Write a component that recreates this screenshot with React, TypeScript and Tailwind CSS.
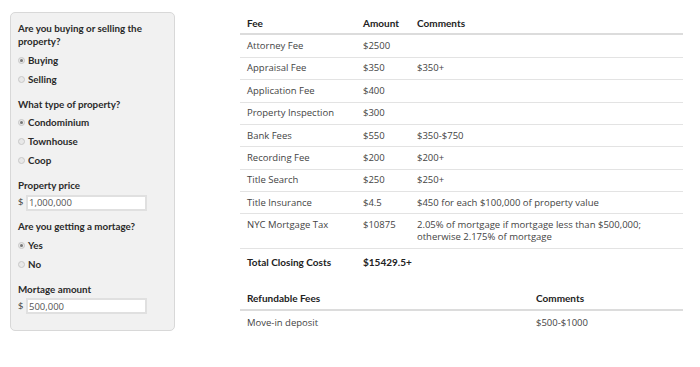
import React from 'react';

const fees = [
  { fee: 'Attorney Fee', amount: '$2500', comment: '' },
  { fee: 'Appraisal Fee', amount: '$350', comment: '$350+' },
  { fee: 'Application Fee', amount: '$400', comment: '' },
  { fee: 'Property Inspection', amount: '$300', comment: '' },
  { fee: 'Bank Fees', amount: '$550', comment: '$350-$750' },
  { fee: 'Recording Fee', amount: '$200', comment: '$200+' },
  { fee: 'Title Search', amount: '$250', comment: '$250+' },
  { fee: 'Title Insurance', amount: '$4.5', comment: '$450 for each $100,000 of property value' },
  { fee: 'NYC Mortgage Tax', amount: '$10875', comment: '2.05% of mortgage if mortgage less than $500,000; otherwise 2.175% of mortgage' },
];

const bold = 'font-bold font-[Lato,sans-serif]';

function Radio({ label, checked }: { label: string; checked?: boolean }) {
  return (
    <label className={`flex items-center h-[19px] gap-[3px] text-[#2a2a2a] text-[9.8px] ${bold}`}>
      <span className="w-[7px] h-[7px] rounded-full border border-[#c8c8c8] bg-[#e8e8e8] flex items-center justify-center">
        {checked && <span className="w-[3px] h-[3px] rounded-full bg-[#777]" />}
      </span>
      {label}
    </label>
  );
}

function Label({ children }: { children: React.ReactNode }) {
  return <div className={`text-[#2a2a2a] text-[9.8px] leading-[13px] mb-[2.5px] ${bold}`}>{children}</div>;
}

function MoneyInput({ value }: { value: string }) {
  return (
    <div className="flex items-center h-[16px] gap-[2px] text-[#444]">
      <span className="w-[5px]">$</span>
      <input
        readOnly
        value={value}
        className="ml-[1px] w-[121px] h-[16px] bg-white border-2 border-[#e0e0e0] px-[1px] text-[9.5px] text-[#555] outline-none"
      />
    </div>
  );
}

const cell = 'px-[7px] py-[4.7px]';

export default function App() {
  return (
    <div className="flex items-start bg-white w-[700px] h-[367px] text-[9.5px]" style={{ fontFamily: '"Open Sans", sans-serif' }}>
      <aside className="ml-[10px] mt-[12px] w-[165px] rounded-[5px] border border-[#d8d8d8] bg-[#f1f1f1] pl-[7px] pr-[10px] pt-[9px] pb-[16px]">
        <Label>Are you buying or selling the property?</Label>
        <Radio label="Buying" checked />
        <Radio label="Selling" />

        <div className="mt-[9px]">
          <Label>What type of property?</Label>
          <Radio label="Condominium" checked />
          <Radio label="Townhouse" />
          <Radio label="Coop" />
        </div>

        <div className="mt-[9px]">
          <Label>Property price</Label>
          <MoneyInput value="1,000,000" />
        </div>

        <div className="mt-[9.5px]">
          <Label>Are you getting a mortage?</Label>
          <Radio label="Yes" checked />
          <Radio label="No" />
        </div>

        <div className="mt-[9px]">
          <Label>Mortage amount</Label>
          <MoneyInput value="500,000" />
        </div>
      </aside>

      <main className="ml-[65px] mt-[12px] w-[443px] text-[#444]">
        <table className="w-full table-fixed border-collapse leading-[12px]">
          <colgroup>
            <col className="w-[116px]" />
            <col className="w-[54px]" />
            <col />
          </colgroup>
          <thead>
            <tr className={`border-b-2 border-[#dcdcdc] text-left text-[#222] text-[10px] ${bold}`}>
              <th className={cell}>Fee</th>
              <th className={cell}>Amount</th>
              <th className={cell}>Comments</th>
            </tr>
          </thead>
          <tbody>
            {fees.map((f) => (
              <tr key={f.fee} className="border-b border-[#e3e3e3] align-top">
                <td className={cell}>{f.fee}</td>
                <td className={cell}>{f.amount}</td>
                <td className={`${cell} pr-[20px]`}>{f.comment}</td>
              </tr>
            ))}
            <tr className={`text-[#222] text-[10px] ${bold}`}>
              <td className="px-[7px] pt-[7px] pb-[5px]">Total Closing Costs</td>
              <td className="px-[7px] pt-[7px] pb-[5px]">$15429.5+</td>
              <td className="px-[7px] pt-[7px] pb-[5px]"></td>
            </tr>
          </tbody>
        </table>

        <table className="mt-[15px] w-full table-fixed border-collapse leading-[12px]">
          <colgroup>
            <col className="w-[289px]" />
            <col />
          </colgroup>
          <thead>
            <tr className={`border-b-2 border-[#dcdcdc] text-left text-[#222] text-[10px] ${bold}`}>
              <th className={cell}>Refundable Fees</th>
              <th className={cell}>Comments</th>
            </tr>
          </thead>
          <tbody>
            <tr>
              <td className="px-[7px] pt-[6px] pb-[4px]">Move-in deposit</td>
              <td className="px-[7px] pt-[6px] pb-[4px]">$500-$1000</td>
            </tr>
          </tbody>
        </table>
      </main>
    </div>
  );
}
